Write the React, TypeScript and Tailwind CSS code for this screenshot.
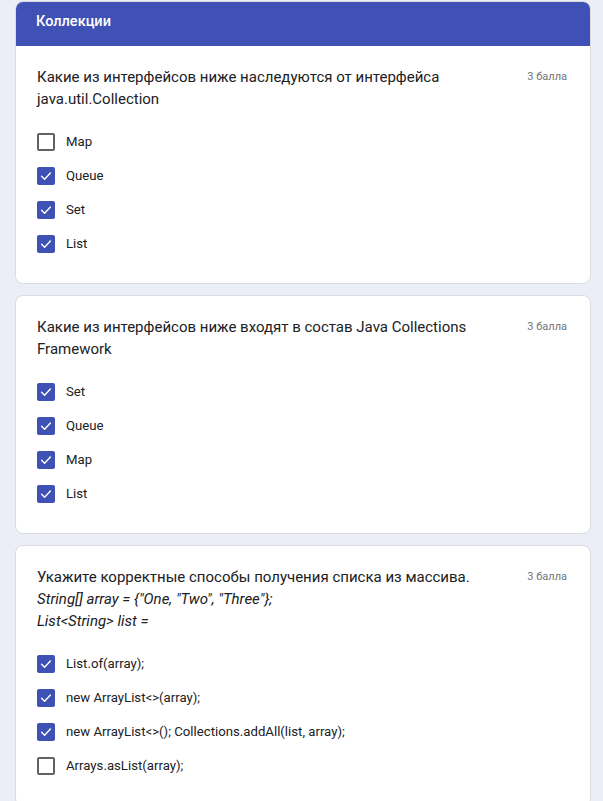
import type { ReactNode } from "react";

interface Option {
  label: string;
  checked: boolean;
}

interface Question {
  title: ReactNode;
  points: string;
  options: Option[];
}

const questions: Question[] = [
  {
    title: (
      <>
        Какие из интерфейсов ниже наследуются от интерфейса
        <br />
        java.util.Collection
      </>
    ),
    points: "3 балла",
    options: [
      { label: "Map", checked: false },
      { label: "Queue", checked: true },
      { label: "Set", checked: true },
      { label: "List", checked: true },
    ],
  },
  {
    title: (
      <>
        Какие из интерфейсов ниже входят в состав Java Collections
        <br />
        Framework
      </>
    ),
    points: "3 балла",
    options: [
      { label: "Set", checked: true },
      { label: "Queue", checked: true },
      { label: "Map", checked: true },
      { label: "List", checked: true },
    ],
  },
  {
    title: (
      <>
        Укажите корректные способы получения списка из массива.
        <br />
        <i>String[] array = {"{"}"One, "Two", "Three"{"}"};</i>
        <br />
        <i>List&lt;String&gt; list =</i>
      </>
    ),
    points: "3 балла",
    options: [
      { label: "List.of(array);", checked: true },
      { label: "new ArrayList<>(array);", checked: true },
      { label: "new ArrayList<>(); Collections.addAll(list, array);", checked: true },
      { label: "Arrays.asList(array);", checked: false },
    ],
  },
];

function Checkbox({ checked }: { checked: boolean }) {
  if (!checked) {
    return <div className="w-[18px] h-[18px] rounded-[2px] border-2 border-[#5f6368] shrink-0" />;
  }
  return (
    <div className="w-[18px] h-[18px] rounded-[2px] bg-[#3f51b5] shrink-0 flex items-center justify-center">
      <svg width="14" height="14" viewBox="0 0 14 14" fill="none">
        <path d="M2.6 7.3 L5.6 10.2 L11.4 4.1" stroke="white" strokeWidth="1.4" strokeLinecap="round" strokeLinejoin="round" />
      </svg>
    </div>
  );
}

function QuestionCard({ q, header }: { q: Question; header?: string }) {
  return (
    <div className="bg-white rounded-[8px] border border-[#dadce0] overflow-hidden">
      {header && (
        <div className="h-[44px] pb-[4px] bg-[#3f51b5] flex items-center px-[20px] text-white text-[14.5px] font-medium">
          {header}
        </div>
      )}
      <div className="pl-[21px] pr-[23px] pt-[20px] pb-[22px]">
        <div className="flex justify-between items-start">
          <div className="text-[15px] leading-[22px] text-[#202124]">{q.title}</div>
          <div className="text-[11px] leading-[22px] text-[#70757a] shrink-0 ml-4">{q.points}</div>
        </div>
        <div className="mt-[15px] flex flex-col">
          {q.options.map((o) => (
            <div key={o.label} className="h-[34px] flex items-center gap-[11px]">
              <Checkbox checked={o.checked} />
              <span className="text-[13.2px] text-[#202124]">{o.label}</span>
            </div>
          ))}
        </div>
      </div>
    </div>
  );
}

export default function App() {
  return (
    <div className="min-h-[801px] bg-[#eceef7] px-[15px] pt-[1px] pb-6 flex flex-col gap-[11px] font-['Roboto',sans-serif]">
      <div className="w-[576px]">
        <QuestionCard q={questions[0]} header="Коллекции" />
      </div>
      <div className="w-[576px]">
        <QuestionCard q={questions[1]} />
      </div>
      <div className="w-[576px]">
        <QuestionCard q={questions[2]} />
      </div>
    </div>
  );
}
